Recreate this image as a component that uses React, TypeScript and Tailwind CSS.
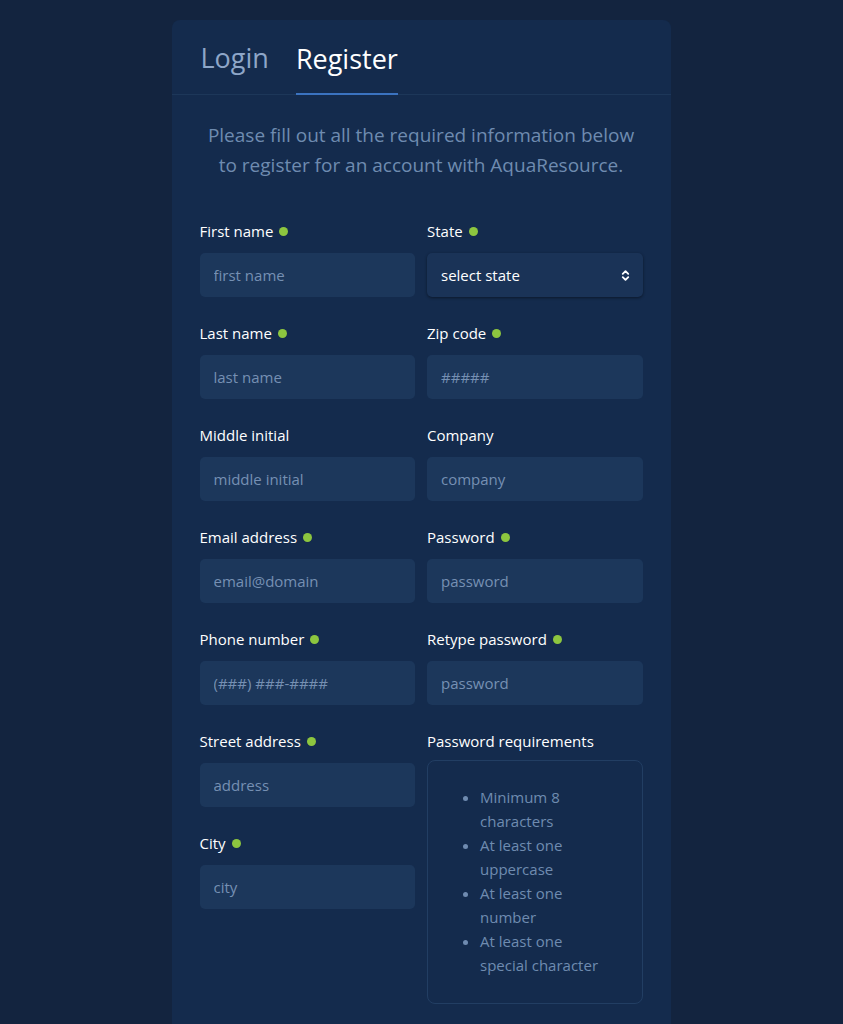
import { ChevronDown, ChevronUp } from "lucide-react"

type Field = { label: string; placeholder: string; required?: boolean }

const LEFT: Field[] = [
  { label: "First name", placeholder: "first name", required: true },
  { label: "Last name", placeholder: "last name", required: true },
  { label: "Middle initial", placeholder: "middle initial" },
  { label: "Email address", placeholder: "email@domain", required: true },
  { label: "Phone number", placeholder: "(###) ###-####", required: true },
  { label: "Street address", placeholder: "address", required: true },
  { label: "City", placeholder: "city", required: true },
]

const RIGHT: Field[] = [
  { label: "Zip code", placeholder: "#####", required: true },
  { label: "Company", placeholder: "company" },
  { label: "Password", placeholder: "password", required: true },
  { label: "Retype password", placeholder: "password", required: true },
]

const REQUIREMENTS = ["Minimum 8 characters", "At least one uppercase", "At least one number", "At least one special character"]

function Label({ text, required }: { text: string; required?: boolean }) {
  return (
    <div className="flex items-center gap-[6px] h-[20px] text-[15px] text-white">
      {text}
      {required && <span className="w-[9px] h-[9px] rounded-full bg-[#8dc63f]" />}
    </div>
  )
}

function TextField({ f }: { f: Field }) {
  return (
    <div className="flex flex-col gap-[12px]">
      <Label text={f.label} required={f.required} />
      <input
        placeholder={f.placeholder}
        className="h-[44px] w-full rounded-[5px] bg-[#1c375b] px-[14px] text-[15px] text-white placeholder:text-[#7690b3] outline-none"
      />
    </div>
  )
}

export default function App() {
  return (
    <div className="min-h-screen bg-[#13243f] flex justify-center pt-[20px]" style={{ fontFamily: "'Open Sans', 'Noto Sans', sans-serif" }}>
      <div className="w-[499px] ml-[-1px] bg-[#142b4d] rounded-t-[8px] min-h-[1004px]">
        <div className="flex gap-[27px] px-[29px] border-b border-[#1d3759]">
          <button className="pt-[17px] pb-[15px] text-[27px] leading-[42px] font-medium text-[#8ea6c8]">Login</button>
          <button className="pt-[17px] pb-[13px] text-[27px] leading-[42px] font-medium text-white border-b-2 border-[#3b73c0] mb-[-1px]">Register</button>
        </div>

        <p className="mt-[25px] px-[35px] text-center text-[19px] leading-[30px] text-[#6f8bb0]">
          Please fill out all the required information below to register for an account with AquaResource.
        </p>

        <div className="grid grid-cols-2 gap-x-[12px] px-[28px] mt-[41px]">
          <div className="flex flex-col gap-[26px]">
            {LEFT.map((f) => <TextField key={f.label} f={f} />)}
          </div>
          <div className="flex flex-col gap-[26px]">
            <div className="flex flex-col gap-[12px]">
              <Label text="State" required />
              <div className="h-[44px] rounded-[5px] bg-[#1a3357] shadow-[0_1px_3px_rgba(0,0,0,0.45)] flex items-center justify-between pl-[14px] pr-[12px] text-[15px] text-white">
                select state
                <span className="flex flex-col items-center -space-y-[5px]">
                  <ChevronUp className="w-[11px] h-[11px]" strokeWidth={4} />
                  <ChevronDown className="w-[11px] h-[11px]" strokeWidth={4} />
                </span>
              </div>
            </div>
            {RIGHT.map((f) => <TextField key={f.label} f={f} />)}
            <div className="flex flex-col gap-[9px]">
              <Label text="Password requirements" />
              <div className="rounded-[8px] border border-[#223e63] pt-[24px] pb-[26px] pl-[29px] pr-[30px]">
                <ul className="list-disc pl-[23px] marker:text-[#6f8bb0] text-[15px] leading-[24px] text-[#6f8bb0]">
                  {REQUIREMENTS.map((r) => <li key={r}>{r}</li>)}
                </ul>
              </div>
            </div>
          </div>
        </div>
      </div>
    </div>
  )
}
